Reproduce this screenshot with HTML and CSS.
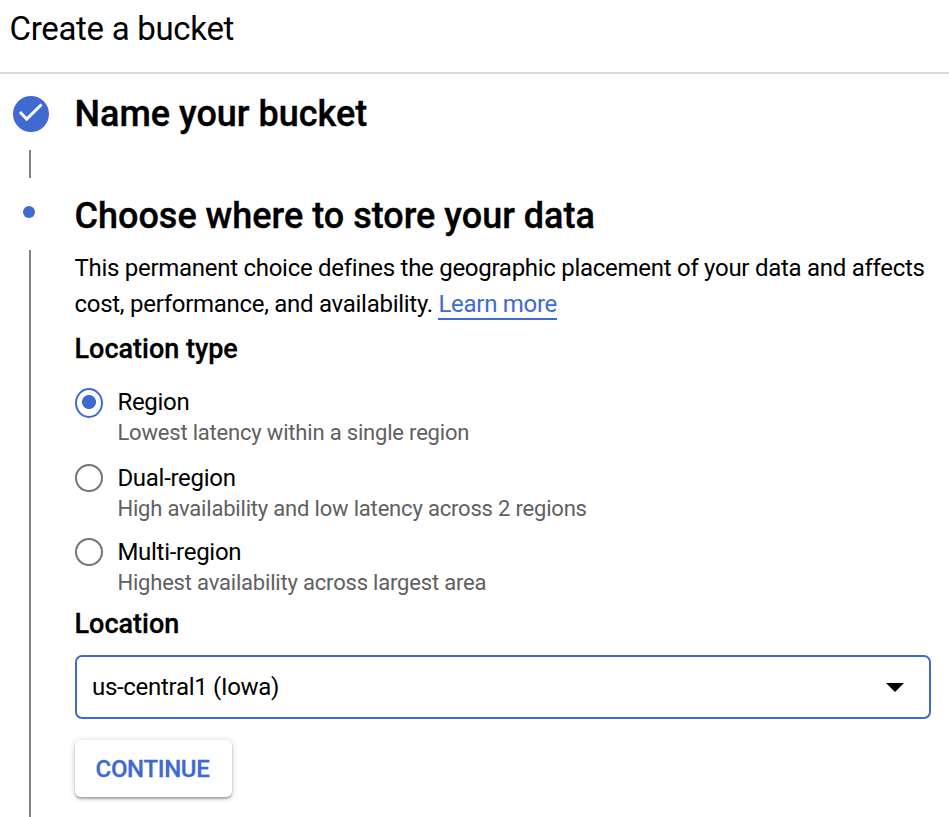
FILE: index.html
```html
<!DOCTYPE html>
<html lang="en">
<head>
<meta charset="utf-8">
<title>Create a bucket</title>
<link rel="stylesheet" href="styles.css">
</head>
<body>
<header class="header"><h1 class="title">Create a bucket</h1></header>
<main class="stepper">
  <div class="rail">
    <svg class="done" viewBox="0 0 36 36"><circle cx="18" cy="18" r="18"/><path d="M7 16l6.7 7L28.5 8.5"/></svg>
    <span class="line line-short"></span>
    <span class="dot"></span>
    <span class="line line-long"></span>
  </div>
  <div class="content">
    <h2 class="step step-name">Name your bucket</h2>
    <h2 class="step step-where">Choose where to store your data</h2>
    <p class="desc">This permanent choice defines the geographic placement of your data and affects<br>cost, performance, and availability. <a class="learn" href="#">Learn more</a></p>
    <h3 class="label label-type">Location type</h3>
    <div class="options">
      <div class="option"><span class="radio checked"></span><div><div class="name">Region</div><div class="hint">Lowest latency within a single region</div></div></div>
      <div class="option"><span class="radio"></span><div><div class="name">Dual-region</div><div class="hint">High availability and low latency across 2 regions</div></div></div>
      <div class="option"><span class="radio"></span><div><div class="name">Multi-region</div><div class="hint">Highest availability across largest area</div></div></div>
    </div>
    <h3 class="label label-loc">Location</h3>
    <div class="select"><span>us-central1 (Iowa)</span><svg class="arrow" viewBox="0 0 18 9"><path d="M0 0h18L9 9z"/></svg></div>
    <button class="continue">CONTINUE</button>
  </div>
</main>
</body>
</html>
```
FILE: styles.css
```css
* { box-sizing: border-box; }
body { margin: 0; height: 817px; overflow: hidden; background: #fff; color: #000; font-family: Roboto, "Liberation Sans", sans-serif; font-size: 24px; letter-spacing: -0.28px; }
h1, h2, h3, p { margin: 0; font-weight: 400; }
.header { height: 74px; padding: 8px 9.5px; border-bottom: 2px solid #dadada; }
.title { font-size: 33px; line-height: 42px; letter-spacing: -0.3px; }
.stepper { display: flex; height: 743px; }
.rail { width: 75px; padding: 22px 0 0 13px; display: flex; flex-direction: column; flex-shrink: 0; }
.done { width: 36px; height: 36px; fill: #3f6ad2; }
.done path { fill: none; stroke: #fff; stroke-width: 3; }
.line { width: 2px; margin-left: 16px; background: #808284; }
.line-short { height: 28px; margin-top: 18px; }
.dot { width: 12px; height: 12px; margin: 28px 0 0 10px; border-radius: 50%; background: #3f6ad2; }
.line-long { flex: 1; margin-top: 32px; }
.content { width: 856px; white-space: nowrap; }
.step { margin-left: -0.5px; font-size: 36px; line-height: 48px; font-weight: 500; letter-spacing: 0; -webkit-text-stroke: 0.35px #000; }
.step-name { margin-top: 16px; }
.step-where { margin-top: 54px; }
.desc { margin: 10px 0 0 -0.5px; line-height: 36px; }
.learn { color: #3f6ad2; text-decoration: none; border-bottom: 2px solid #3f6ad2; }
.label { margin-left: -0.5px; font-size: 27px; line-height: 34px; font-weight: 500; letter-spacing: 0; -webkit-text-stroke: 0.3px #000; }
.label-type { margin-top: 10px; }
.options { margin-top: 20px; display: grid; grid-template-rows: 76px 74px 74px; }
.option { display: flex; gap: 14.4px; }
.radio { width: 28px; height: 28px; margin-top: 2px; border: 2px solid #757575; border-radius: 50%; }
.checked { height: 30px; border-color: #3f6ad2; background: radial-gradient(circle at 12px 12px, #3f6ad2 6.6px, transparent 7.4px); }
.name { line-height: 32px; }
.hint { font-size: 22px; line-height: 30px; letter-spacing: -0.19px; color: #606060; }
.label-loc { margin-top: -3px; }
.select { height: 64px; margin-top: 14px; padding: 0 25px 0 15px; display: flex; align-items: center; justify-content: space-between; border: 2px solid #3f6ad2; border-radius: 7px; }
.select span { letter-spacing: -0.3px; }
.arrow { width: 18px; height: 9px; }
.continue { display: block; width: 157px; height: 57px; margin-top: 21px; padding: 0 2px 0 0; border: 0; border-radius: 6px; background: #fff; color: #3f6ad2; font: 500 24px/58px Roboto, sans-serif; letter-spacing: -0.35px; -webkit-text-stroke: 0.3px #3f6ad2; box-shadow: 0 2px 2px rgba(0,0,0,.25), 0 1px 6px rgba(0,0,0,.2); }
```
